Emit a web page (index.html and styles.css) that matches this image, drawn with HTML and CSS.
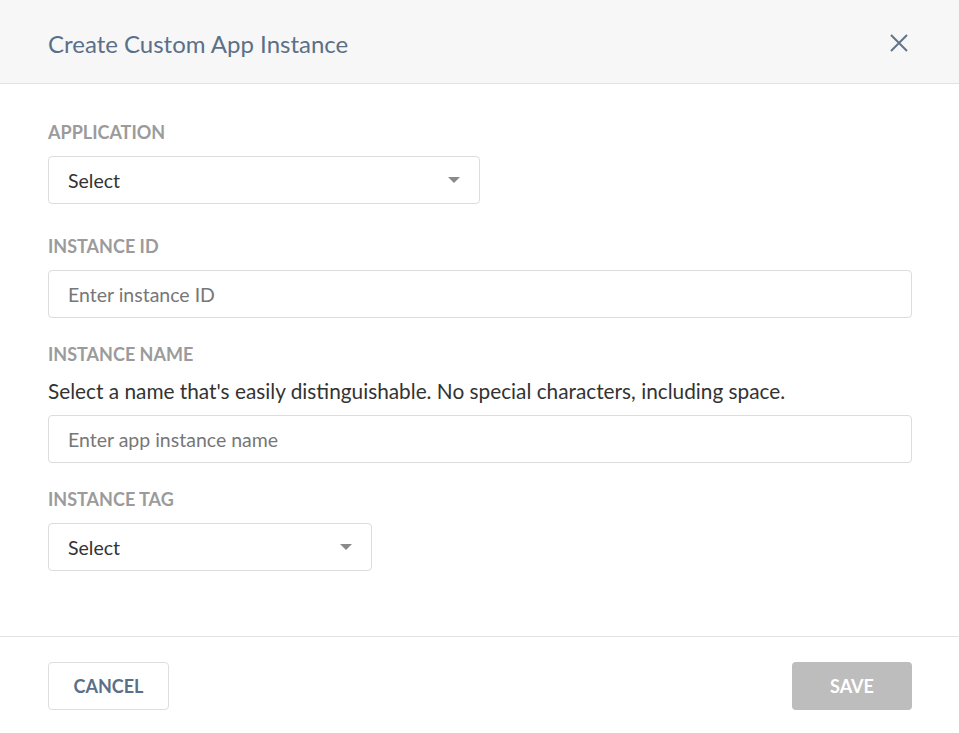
FILE: index.html
```html
<!DOCTYPE html>
<html>
<head>
<meta charset="utf-8">
<link rel="stylesheet" href="styles.css">
</head>
<body>
<div class="modal">
  <div class="modal-header">
    <h1 class="modal-title">Create Custom App Instance</h1>
    <button class="close-btn" aria-label="Close">
      <svg width="18" height="18" viewBox="0 0 18 18"><path d="M1 1 L17 17 M17 1 L1 17" stroke="#5f7489" stroke-width="2" fill="none"/></svg>
    </button>
  </div>
  <div class="modal-body">
    <div class="field field-first">
      <label class="field-label">APPLICATION</label>
      <div class="select select-wide"><span>Select</span><span class="caret"></span></div>
    </div>
    <div class="field">
      <label class="field-label">INSTANCE ID</label>
      <div class="input"><span class="placeholder">Enter instance ID</span></div>
    </div>
    <div class="field">
      <label class="field-label">INSTANCE NAME</label>
      <p class="help">Select a name that's easily distinguishable. No special characters, including space.</p>
      <div class="input"><span class="placeholder">Enter app instance name</span></div>
    </div>
    <div class="field">
      <label class="field-label">INSTANCE TAG</label>
      <div class="select select-narrow"><span>Select</span><span class="caret"></span></div>
    </div>
  </div>
  <div class="modal-footer">
    <button class="btn btn-cancel">CANCEL</button>
    <button class="btn btn-save">SAVE</button>
  </div>
</div>
</body>
</html>
```
FILE: styles.css
```css
* { box-sizing: border-box; }
html, body { margin: 0; padding: 0; background: #fff; }
body { font-family: Lato, "Open Sans", sans-serif; color: #333; }
.modal { width: 959px; height: 733px; display: flex; flex-direction: column; background: #fff; }
.modal-header {
  height: 84px; flex: none; background: #f7f7f7; border-bottom: 1px solid #e3e3e3;
  display: flex; align-items: center; justify-content: space-between;
  padding: 0 48px 0 48px;
}
.modal-title { margin: 4px 0 0; font-size: 24px; line-height: 30px; font-weight: 400; color: #5b7088; }
.close-btn { background: none; border: 0; padding: 0; width: 18px; height: 18px; display: flex; cursor: pointer; margin-right: 3px; margin-top: 2px; }
.modal-body { flex: 1; padding: 36px 47px 0 48px; }
.field { margin-bottom: 24px; }
.field-first { margin-bottom: 30px; }
.field-label { display: block; font-size: 18px; font-weight: 700; color: #9b9b9b; line-height: 24px; margin-bottom: 12px; }
.help { margin: 0 0 11px; font-size: 20.8px; line-height: 26px; color: #333; }
.select, .input {
  height: 48px; border: 1px solid #dcdcdc; border-radius: 4px; background: #fff;
  display: flex; align-items: center; padding: 0 19px; font-size: 19.5px;
}
.select { justify-content: space-between; }
.select-wide { width: 432px; }
.select-narrow { width: 324px; }
.caret { width: 0; height: 0; border-left: 6px solid transparent; border-right: 6px solid transparent; border-top: 6px solid #8a8a8a; }
.placeholder { color: #777; }
.modal-footer {
  height: 97px; flex: none; border-top: 1px solid #e3e3e3;
  display: flex; align-items: flex-start; justify-content: space-between;
  padding: 25px 47px 0 48px;
}
.btn { height: 48px; border-radius: 4px; font-family: Lato, sans-serif; font-size: 18px; font-weight: 700; }
.btn-cancel { width: 121px; background: #fff; border: 1px solid #dedede; color: #5b7088; }
.btn-save { width: 120px; background: #bdbdbd; border: 0; color: #fff; }
```
